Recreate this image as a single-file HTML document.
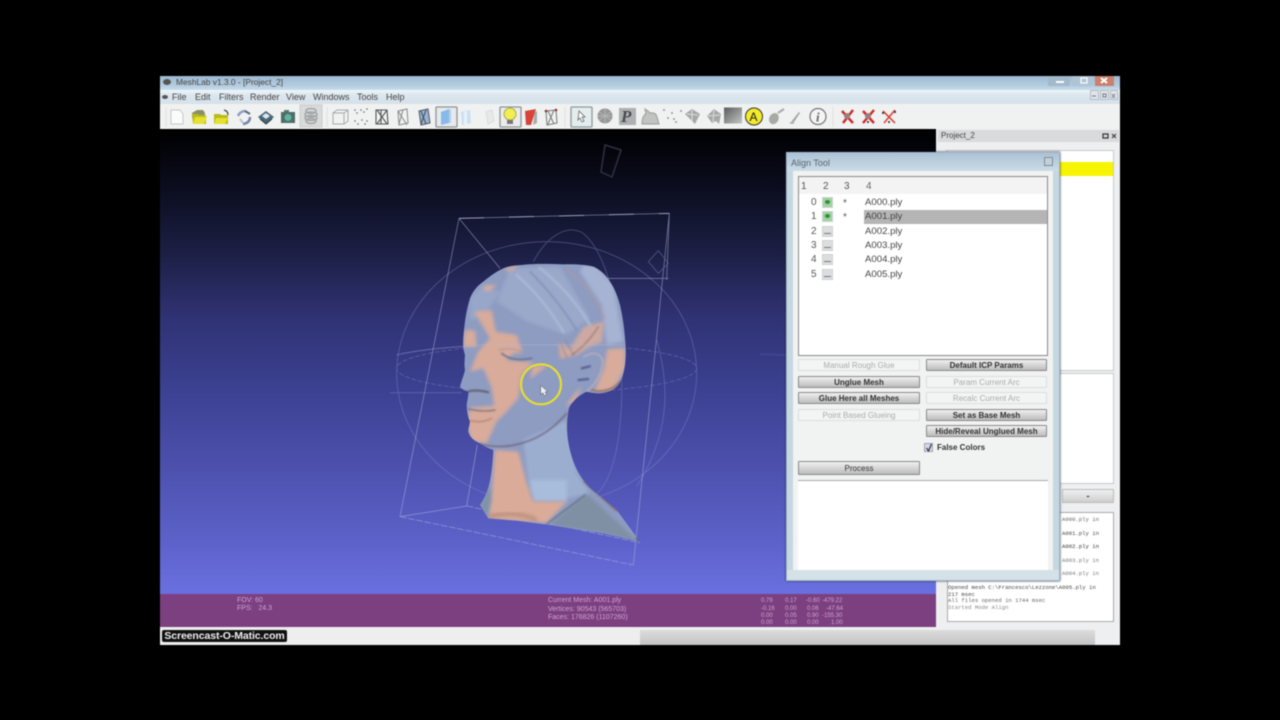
<!DOCTYPE html>
<html>
<head>
<meta charset="utf-8">
<style>
html,body{margin:0;padding:0;background:#000;width:1280px;height:720px;overflow:hidden}
body{font-family:"Liberation Sans",sans-serif;color:#333}
#w{position:absolute;left:0;top:0;width:1280px;height:720px;filter:blur(.5px)}
.a{position:absolute;white-space:nowrap}
.btn{position:absolute;height:12px;line-height:12px;text-align:center;font-size:8px;box-sizing:border-box;border:1px solid #8a8a8a;border-radius:1px;background:linear-gradient(#f0f0f0,#d6d6d6 50%,#bdbdbd);color:#333;font-weight:bold}
.dis{border:1px solid #dcdcdc;background:#f3f4f4;color:#aaa;font-weight:normal}
.row{position:absolute;left:865px;font-size:9.6px;color:#444;line-height:14px}
.num{position:absolute;left:811px;font-size:10px;color:#555;line-height:14px}
.eye{position:absolute;left:822px;width:11px;height:11px;background:#dcdede;border:1px solid #cfd1d1;box-sizing:border-box}
.eye:after{content:"";position:absolute;left:1px;right:1px;top:6px;height:1px;background:#778}
.eye.g{background:#9ed29e}
.eye.g:after{left:2px;right:2px;top:2px;height:4px;background:#2f8f3f;border-radius:50%}
.log{position:absolute;left:948px;font:5.6px "Liberation Mono",monospace;color:#666;white-space:nowrap}
.m{position:absolute;top:92px;font-size:9px;color:#444;line-height:11px}
.ov{position:absolute;font-size:7px;color:#cba6d2;white-space:nowrap;line-height:8px}
</style>
</head>
<body>
<div id="w">
<!-- window -->
<div class="a" style="left:160px;top:76px;width:960px;height:569px;background:#eef0f0"></div>
<div class="a" style="left:160px;top:76px;width:960px;height:14px;background:linear-gradient(#9db9d0,#b5cde0 70%,#c8dcea)"></div>
<div class="a" style="left:163px;top:79px;width:8px;height:6px;background:#555;border-radius:50%"></div>
<div class="a" style="left:176px;top:76px;font-size:8.4px;line-height:12px;color:#444">MeshLab v1.3.0 - [Project_2]</div>
<div class="a" style="left:160px;top:90px;width:960px;height:14px;background:linear-gradient(#eef8fa 0,#dde7ef 30%,#d6e0ea)"></div>
<div class="a" style="left:162px;top:95px;width:6px;height:4px;background:#555;border-radius:50%"></div>
<div class="m" style="left:172px">File</div>
<div class="m" style="left:195px">Edit</div>
<div class="m" style="left:219px">Filters</div>
<div class="m" style="left:250px">Render</div>
<div class="m" style="left:286px">View</div>
<div class="m" style="left:313px">Windows</div>
<div class="m" style="left:357px">Tools</div>
<div class="m" style="left:386px">Help</div>
<!-- window buttons -->
<div class="a" style="left:1048px;top:76px;width:22px;height:10px;background:#a2b9cc"></div>
<div class="a" style="left:1072px;top:76px;width:21px;height:10px;background:#aec4d5"></div>
<div class="a" style="left:1095px;top:76px;width:19px;height:10px;background:#c9806e"></div>
<svg class="a" style="left:1048px;top:76px" width="72" height="26">
<path d="M8 6h8" stroke="#fff" stroke-width="2"/>
<rect x="33" y="2" width="6" height="5" fill="none" stroke="#fff" stroke-width="1.200"/>
<path d="M53 2l6 5M59 2l-6 5" stroke="#fff" stroke-width="2"/>
<rect x="42.500" y="14.500" width="8" height="9" fill="#dfe5ea" stroke="#b4bcc4"/>
<rect x="52.500" y="14.500" width="8" height="9" fill="#dfe5ea" stroke="#b4bcc4"/>
<rect x="62.500" y="14.500" width="7" height="9" fill="#dfe5ea" stroke="#b4bcc4"/>
<path d="M44 20h4M55 18h3v3h-3zM64 18l3 4M67 18l-3 4" stroke="#778" fill="none"/>
</svg>
<!-- toolbar -->
<div class="a" style="left:160px;top:104px;width:960px;height:25px;background:#f0f1f1"></div>
<svg class="a" style="left:160px;top:104px" width="780" height="26" viewBox="160 104 780 26">
<rect x="300" y="105" width="22" height="22" fill="#d9dbdb" stroke="#cacccc"/>
<rect x="436" y="107" width="21" height="20" rx="1" fill="#e6eaec" stroke="#8e9496" stroke-width="1.300"/>
<rect x="500" y="107" width="21" height="20" rx="1" fill="#ececec" stroke="#8e9496" stroke-width="1.300"/>
<rect x="571" y="107" width="21" height="20" rx="1" fill="#e4ecee" stroke="#8e9a9c" stroke-width="1.300"/>
<path d="M327 107v20M166 107v20M565 107v20M833 107v20" stroke="#e0e0e0"/>
<!-- new -->
<path d="M171 110h9l3 4v10h-12z" fill="#fbfbfb" stroke="#c8c8c8"/>
<!-- open -->
<path d="M192 113l5-3 6 0 2 3-1 5-12 0z" fill="#8a8f66"/>
<path d="M192 114h6l1 1h7v9h-13z" fill="#b8bc18"/>
<path d="M193 124l2-7h12l-3 7z" fill="#e6e030"/>
<!-- recent -->
<path d="M214 114h6l1 1h7v9h-14z" fill="#b8bc18"/>
<path d="M214 124l2-6h12l-3 6z" fill="#e6e030"/>
<path d="M224 110q4 1 4 5" stroke="#444" fill="none" stroke-width="1.200"/>
<!-- reload -->
<path d="M238 116q2-5 8-5" stroke="#8da0c4" stroke-width="2.500" fill="none"/>
<path d="M250 117q0 6-7 7" stroke="#7486a6" stroke-width="2.500" fill="none"/>
<path d="M240 119l3 4" stroke="#b8c4d4" stroke-width="2"/>
<path d="M245 111l5 3" stroke="#5a6880" stroke-width="2"/>
<!-- save -->
<path d="M258 117l8-6 8 6-8 7z" fill="#46687a"/>
<path d="M262 116l4-3 4 3-4 3z" fill="#dfe6ea"/>
<path d="M260 119l6 5 6-5" stroke="#333" fill="none"/>
<!-- snapshot -->
<rect x="281" y="112" width="14" height="11" fill="#4d6e68"/>
<circle cx="288" cy="117.500" r="3.500" fill="#5fb3a0"/>
<rect x="284" y="110" width="5" height="2" fill="#5a7a70"/>
<!-- layers -->
<g fill="none" stroke="#a2a5a5" stroke-width="1.500">
<ellipse cx="311" cy="111" rx="5" ry="2.500"/><ellipse cx="311" cy="114.500" rx="6" ry="2.500"/><ellipse cx="311" cy="118" rx="6" ry="2.500"/><ellipse cx="311" cy="121" rx="5" ry="2.500"/>
</g>
<!-- box -->
<g fill="none" stroke="#a8aaaa"><path d="M333 113h11v11h-11zM333 113l4-3h11v11l-4 3M344 113l4-3"/></g>
<!-- points -->
<g fill="#666"><circle cx="355" cy="110" r=".8"/><circle cx="361" cy="110" r=".8"/><circle cx="367" cy="109" r=".8"/><circle cx="357" cy="113" r=".8"/><circle cx="364" cy="112" r=".8"/><circle cx="355" cy="121" r=".8"/><circle cx="362" cy="120" r=".8"/><circle cx="367" cy="121" r=".8"/><circle cx="358" cy="124" r=".8"/><circle cx="365" cy="124" r=".8"/></g>
<!-- wire -->
<g fill="none" stroke="#555" stroke-width="1.100"><path d="M376 110h11l1 14h-12zM377 110l10 14M387 110l-10 14M381 110v14"/></g>
<g fill="none" stroke="#888"><path d="M398 111l9-2 1 14-9 2zM398 111l9 14M403 110l-4 14"/></g>
<path d="M419 111l9-2 2 14-9 2z" fill="#98b4d0" stroke="#556"/><path d="M421 111l5 13M426 110l-5 14" stroke="#3d4a5a"/>
<path d="M441 112l8-3v14l-8 2z" fill="#86baea"/><path d="M449 109l2 1v13l-2 0z" fill="#b4cfe8"/>
<path d="M461 112l9-2 1 13-9 2z" fill="#c8e0f2"/><path d="M464 112l3-1v13l-3 1z" fill="#e8f2f9"/>
<path d="M486 112l6-2 2 11-6 3z" fill="#e8e8e8" stroke="#dcdcdc"/>
<!-- bulb -->
<circle cx="510" cy="114" r="6" fill="#f2ee50" stroke="#a8a860"/><rect x="507" y="120" width="6" height="4" fill="#777"/>
<!-- red -->
<path d="M525 111l11-2-5 16-5 0z" fill="#d8433a"/><path d="M535 110l2 2 0 11-4 2z" fill="#aaa"/>
<g fill="none" stroke="#777"><path d="M546 111l10-1 1 13-10 2zM548 111l6 13M554 110l-6 14"/></g>
<g fill="#8a3030"><circle cx="546" cy="111" r="1.300"/><circle cx="556" cy="110" r="1.300"/></g>
<!-- pointer -->
<path d="M579 111l6 6-3 0 2 4-2 1-2-4-2 2z" fill="#fff" stroke="#666" stroke-width=".8"/>
<!-- edit icons -->
<circle cx="605" cy="116" r="7.500" fill="#969797"/><path d="M599 112l12 8M611 112l-12 8M605 109v14M598 116h14" stroke="#b4b4b4"/>
<rect x="619" y="108" width="17" height="17" fill="#aeb1b1"/><text x="621" y="122" font-family="Liberation Serif,serif" font-weight="bold" font-style="italic" font-size="17" fill="#4a4a4e">P</text>
<path d="M642 124q0-8 4-10l-1-5 3 2 2 2q6-1 7 4l2 7z" fill="#c0c3c0" stroke="#9a9d9a"/>
<g fill="#999"><circle cx="664" cy="110" r="1"/><circle cx="672" cy="113" r="1"/><circle cx="681" cy="111" r="1"/><circle cx="668" cy="118" r="1"/><circle cx="676" cy="122" r="1"/><circle cx="674" cy="119" r="1"/></g>
<path d="M685 114l7-5 8 5-5 10-3-3z" fill="#a6a8a8"/><path d="M687 114l11 1M692 110l0 11" stroke="#ddd"/>
<path d="M707 116l7-7 7 5-2 10-3-3-4 2z" fill="#a6a8a8"/><path d="M708 116l12-1M714 110l-1 12" stroke="#ddd"/>
<defs><linearGradient id="g1" x1="0" y1="0" x2="1" y2="1"><stop offset="0" stop-color="#5a5c5c"/><stop offset="1" stop-color="#c4c6c6"/></linearGradient></defs>
<rect x="724" y="107.500" width="18" height="16" fill="url(#g1)"/>
<circle cx="754" cy="116.500" r="8.500" fill="#f2ea2a" stroke="#333"/>
<text x="749.500" y="121" font-size="12" fill="#222">A</text>
<path d="M769 119q1-6 7-6 4 2 2 8-3 4-6 3-3-1-3-5z" fill="#a8a8a4"/><path d="M778 113l6-4" stroke="#aaa" stroke-width="2"/>
<path d="M791 122l8-10 1 1-6 9z" fill="#a4a4a0"/><path d="M790 123l4 0" stroke="#888"/>
<circle cx="818" cy="116.500" r="8" fill="#f4f4f4" stroke="#777" stroke-width="1.200"/>
<text x="816" y="121.500" font-family="Liberation Serif,serif" font-style="italic" font-weight="bold" font-size="13" fill="#666">i</text>
<!-- X -->
<g stroke="#d02c2c" stroke-width="2.500"><path d="M842 111l11 12M853 110l-10 13M863 111l11 12M874 110l-11 13"/></g>
<g stroke="#d84a3c" stroke-width="1.600"><path d="M883 111l12 12M895 110l-11 13"/></g>
<g fill="#9a8080"><circle cx="847" cy="116" r="3"/><circle cx="868" cy="116" r="3"/></g>
<g fill="#222"><circle cx="883" cy="113" r="1"/><circle cx="889" cy="122" r="1"/><circle cx="895" cy="112" r="1"/><circle cx="868" cy="122" r="1"/></g>
</svg>
<!-- viewport -->
<div class="a" style="left:160px;top:129px;width:776px;height:465px;background:linear-gradient(#000 0,#0d0f22 14%,#1e2148 28%,#2f3272 40%,#3b4090 55%,#4c50ac 72%,#5c61c8 88%,#6a70e0 100%)"></div>
<svg class="a" style="left:160px;top:129px" width="776" height="465" viewBox="160 129 776 465">
<defs>
<filter id="b" x="-5%" y="-50%" width="110%" height="200%"><feGaussianBlur stdDeviation="2.500"/></filter>
<filter id="s" x="-30%" y="-30%" width="160%" height="160%"><feGaussianBlur stdDeviation="5"/></filter>
<filter id="t" x="-30%" y="-30%" width="160%" height="160%"><feGaussianBlur stdDeviation="1.500"/></filter>
<filter id="h" x="-5%" y="-5%" width="110%" height="110%"><feGaussianBlur stdDeviation="1.200"/></filter>
<clipPath id="head"><path id="hp" d="M240 295C250 270 265 255 280 245C300 228 315 218 330 210C350 198 375 196 395 195C440 190 480 192 520 193C560 192 590 195 610 200C635 212 650 228 660 245C675 268 684 292 690 315C698 350 703 385 705 415C708 445 708 470 705 495C700 525 695 545 680 560C665 573 650 578 630 580C615 580 600 578 590 575C570 585 558 595 550 605C540 615 536 625 535 635C528 680 530 720 545 770C560 820 590 860 620 880L680 930L750 1025L640 1000L480 975L380 962L295 955L270 915C295 880 305 840 310 750C295 745 282 738 270 730C252 722 240 712 235 695C234 685 240 675 240 665C234 650 230 632 230 615C232 600 236 585 235 575C225 572 215 568 210 560C215 540 222 525 225 510C222 495 224 480 225 465C220 450 220 440 220 445C218 415 222 390 225 365C228 340 234 315 240 295z"/></clipPath>
</defs>
<path d="M605 145L621 150L612 177L601 172z" fill="none" stroke="#2e3044" stroke-width="1.500"/>
<path d="M160 285H936" stroke="#3a2f68" stroke-width="6" opacity=".35" filter="url(#b)"/>
<path d="M760 354Q840 358 936 356" stroke="#5a5fb0" stroke-width="1" fill="none" opacity=".5"/>
<g transform="translate(390 200) scale(.33333)">
<g fill="none" stroke="#8f92cf" stroke-width="2.500" opacity=".42">
<ellipse cx="470" cy="520" rx="450" ry="395"/>
<ellipse cx="470" cy="505" rx="450" ry="72" stroke-dasharray="14 6"/>
<path d="M430 185C470 110 530 70 580 100C650 160 700 340 695 590C690 780 650 880 590 900"/>
<path d="M800 420C840 560 840 700 740 860"/>
<path d="M0 578H215"/>
</g>
<g fill="none" stroke="#b4b7e4" stroke-width="2.200" opacity=".62">
<path d="M207 55L838 40L830 240M207 55L30 950M838 40L730 1095M207 55L330 205M645 235H835M30 950L230 918L262 735"/>
<path d="M30 950L730 1095M230 918L750 1028" stroke-dasharray="20 5"/>
<path d="M775 185L805 152L835 190L805 220z" stroke="#7e80c0"/>
</g>
<path d="M207 55L838 40" stroke="#d6d8f0" stroke-width="3" stroke-dasharray="75 75" fill="none" opacity=".5"/>
<use href="#hp" fill="#8e9cc2"/>
<g clip-path="url(#head)" filter="url(#h)">
<!-- neck / chest -->
<g filter="url(#s)">
<path d="M400 720L530 660L560 820L600 880L480 905L420 880z" fill="#9caed0"/>
<path d="M420 840L530 840L530 905L430 905z" fill="#a8bcdc"/>
<path d="M480 975L590 880L750 1030L640 1000z" fill="#7f90a4"/>
<path d="M300 860L312 900L290 955L268 915z" fill="#7f93a8"/>
</g>
<g filter="url(#s)" fill="#dbab99">
<path d="M315 750L385 755L410 850L430 905L530 905L470 968L295 958L305 900z"/>
</g>
<path d="M295 950Q380 930 440 960" stroke="#a8806e" stroke-width="14" fill="none" opacity=".55" filter="url(#s)"/>
<g transform="translate(180 165)">
<!-- hair shading -->
<g filter="url(#s)">
<path d="M400 30L440 35L490 90L520 260L470 270L455 150L390 50z" fill="#a6b3d3"/>
<path d="M180 40L330 35L420 190L350 240L230 200L140 140z" fill="#9aa8ca"/>
<path d="M60 130L100 90L150 110L110 170L60 200z" fill="#97a6c9"/>
</g>
<!-- skin patches -->
<g filter="url(#s)" fill="#d8ab9b">
<path d="M72 170L125 165L138 230L200 240L218 292L190 296L168 315L250 322L215 360L205 430L170 470L140 500L110 565L62 560L50 500L60 458L132 452L125 400L100 340L60 350L84 290L120 250z"/>
<path d="M44 226L76 226L80 276L40 276z"/>
<path d="M105 92L140 88L120 108L100 108z"/>
<path d="M160 40L210 32L180 50z"/>
<path d="M250 332L292 332L240 372z"/>
<path d="M472 282L525 280L525 340L490 405L432 412L462 340z"/>
<path d="M402 214L462 200L456 262L420 275L380 300L330 312L325 262L360 280z" opacity=".85"/>
<path d="M375 415L395 395L375 440L345 455z"/>
</g>
<!-- strands and features -->
<g filter="url(#t)" fill="none" stroke-linecap="round">
<path d="M200 60Q280 130 340 230M270 40Q360 110 420 210" stroke="#a9b6d4" stroke-width="9"/>
<path d="M240 50Q320 130 380 225" stroke="#8393ba" stroke-width="5"/>
<path d="M350 45Q420 90 465 190" stroke="#b89a92" stroke-width="3"/>
<path d="M330 262L352 310M345 255L372 300" stroke="#9c8a94" stroke-width="3"/>
<path d="M365 300Q410 270 445 215" stroke="#97786e" stroke-width="3.500"/>
<path d="M400 305Q450 280 458 320Q455 370 410 410" stroke="#c0b0b8" stroke-width="4"/>
<path d="M395 340L420 334M385 375L415 372" stroke="#4a4a80" stroke-width="5"/>
<path d="M425 405Q480 420 520 370" stroke="#8d6e5e" stroke-width="5"/>
<path d="M155 295Q185 322 245 310" stroke="#5f6a8a" stroke-width="4.500"/>
<path d="M148 285Q190 275 215 292" stroke="#a68e90" stroke-width="2.500"/>
<path d="M52 410Q80 402 115 412" stroke="#5c5560" stroke-width="5"/>
<path d="M55 462Q100 472 135 465" stroke="#6a6878" stroke-width="3.500"/>
<path d="M60 497Q100 505 125 490" stroke="#a5786a" stroke-width="3"/>
</g>
</g>
<g filter="url(#t)" fill="none" stroke-linecap="round">
<path d="M270 732Q340 750 410 725Q480 700 530 640" stroke="#6e6078" stroke-width="4"/>
<path d="M535 660Q530 760 610 870" stroke="#8a6a60" stroke-width="5"/>
<path d="M585 845L680 930" stroke="#8a6e66" stroke-width="9"/>
<path d="M470 972L585 885" stroke="#62707e" stroke-width="4"/>
<path d="M740 1015L750 1025" stroke="#3c4a50" stroke-width="5"/>
</g>
</g>
<path d="M20 465Q100 445 290 435H700" fill="none" stroke="#b6badf" stroke-width="2" opacity=".65"/>
<circle cx="453" cy="553" r="60" fill="none" stroke="#e6de2e" stroke-width="6.500"/>
<path d="M452 556l0 28 6-6 6 9 6-3-5-8 8-1z" fill="#eef0f4" stroke="#555" stroke-width="1.500"/>
</g>
</svg>
<!-- purple bar -->
<div class="a" style="left:160px;top:594px;width:776px;height:33px;background:#7c3f80"></div>
<div class="ov" style="left:237px;top:597px">FOV: 60</div>
<div class="ov" style="left:237px;top:605px">FPS: &nbsp;&nbsp;24.3</div>
<div class="ov" style="left:548px;top:597px">Current Mesh: A001.ply</div>
<div class="ov" style="left:548px;top:606px">Vertices: 90543 (565703)</div>
<div class="ov" style="left:548px;top:614px">Faces: 176826 (1107260)</div>
<div class="ov" style="left:761px;top:597px;font-size:6px">0.79</div><div class="ov" style="left:785px;top:597px;font-size:6px">0.17</div><div class="ov" style="left:806px;top:597px;font-size:6px">-0.60</div><div class="ov" style="left:822px;top:597px;font-size:6px">-479.22</div>
<div class="ov" style="left:761px;top:605px;font-size:6px">-0.16</div><div class="ov" style="left:785px;top:605px;font-size:6px">0.00</div><div class="ov" style="left:807px;top:605px;font-size:6px">0.06</div><div class="ov" style="left:826px;top:605px;font-size:6px">-47.64</div>
<div class="ov" style="left:761px;top:612px;font-size:6px">0.00</div><div class="ov" style="left:785px;top:612px;font-size:6px">0.05</div><div class="ov" style="left:807px;top:612px;font-size:6px">0.90</div><div class="ov" style="left:822px;top:612px;font-size:6px">-155.30</div>
<div class="ov" style="left:761px;top:619px;font-size:6px">0.00</div><div class="ov" style="left:785px;top:619px;font-size:6px">0.00</div><div class="ov" style="left:807px;top:619px;font-size:6px">0.00</div><div class="ov" style="left:831px;top:619px;font-size:6px">1.00</div>
<!-- right panel -->
<div class="a" style="left:936px;top:129px;width:184px;height:516px;background:#eeeff0"></div>
<!-- bottom -->
<div class="a" style="left:160px;top:627px;width:480px;height:18px;background:#eeeeee"></div>
<div class="a" style="left:640px;top:630px;width:455px;height:15px;background:linear-gradient(#dcdcdc,#c4c4c4)"></div>
<div class="a" style="left:162px;top:630px;width:125px;height:12px;background:#111;border-radius:2px;color:#eee;font-size:10.500px;font-weight:bold;line-height:12px;text-align:center;letter-spacing:-.1px">Screencast-O-Matic.com</div>
<div class="a" style="left:938px;top:130px;width:181px;height:12px;background:#d9dadb"></div>
<div class="a" style="left:941px;top:131px;font-size:8px;line-height:10px;color:#444">Project_2</div>
<svg class="a" style="left:1100px;top:131px" width="18" height="10"><rect x="3" y="3" width="5" height="4" fill="none" stroke="#333" stroke-width="1.200"/><path d="M12 3l4 4M16 3l-4 4" stroke="#333"/></svg>
<div class="a" style="left:946px;top:150px;width:168px;height:221px;background:#fff;border:1px solid #c8c8c8;box-sizing:border-box"></div>
<div class="a" style="left:1060px;top:162px;width:53px;height:14px;background:#f7f400"></div>
<div class="a" style="left:946px;top:373px;width:168px;height:111px;background:#fff;border:1px solid #c8c8c8;box-sizing:border-box"></div>
<div class="a" style="left:1062px;top:489px;width:52px;height:14px;background:linear-gradient(#f0f0f0,#cfcfcf);border:1px solid #bbb;box-sizing:border-box;text-align:center;font-size:9px;line-height:12px;font-weight:bold">-</div>
<div class="a" style="left:947px;top:512px;width:167px;height:110px;background:#fff;border:1px solid #aaa;box-sizing:border-box"></div>
<div class="log" style="left:1062px;top:516px">A000.ply in</div>
<div class="log" style="left:1062px;top:530px;color:#444">A001.ply in</div>
<div class="log" style="left:1062px;top:543px;color:#333">A002.ply in</div>
<div class="log" style="left:1062px;top:557px;color:#777">A003.ply in</div>
<div class="log" style="left:1062px;top:570px;color:#777">A004.ply in</div>
<div class="log" style="top:584px;color:#444">Opened mesh C:\Francesco\Lezzone\A005.ply in</div>
<div class="log" style="top:591px;color:#444">217 msec</div>
<div class="log" style="top:597px">All files opened in 1744 msec</div>
<div class="log" style="top:604px;color:#888">Started Mode Align</div>
<!-- dialog -->
<div class="a" style="left:786px;top:152px;width:274px;height:429px;background:#dfe6e8;border:1px solid #9fb6c9;box-sizing:border-box;box-shadow:0 0 2px #223"></div>
<div class="a" style="left:787px;top:153px;width:272px;height:18px;background:linear-gradient(#abc3d5,#cbdce6)"></div>
<div class="a" style="left:787px;top:171px;width:6px;height:409px;background:#c5d7e1"></div>
<div class="a" style="left:1053px;top:171px;width:6px;height:409px;background:#c5d7e1"></div>
<div class="a" style="left:787px;top:570px;width:272px;height:10px;background:#d4e2e8"></div>
<div class="a" style="left:793px;top:171px;width:260px;height:399px;background:#f1f2f2"></div>
<div class="a" style="left:791px;top:158px;font-size:9px;line-height:11px;color:#5a6470">Align Tool</div>
<div class="a" style="left:1044px;top:157px;width:9px;height:9px;background:#c3ced6;border:1px solid #7f8d99;box-sizing:border-box"></div>
<div class="a" style="left:798px;top:176px;width:250px;height:180px;background:#fff;border:1px solid #8a8a8a;box-sizing:border-box"></div>
<div class="a" style="left:799px;top:177px;width:248px;height:17px;background:#f3f3f3"></div>
<div class="a" style="left:801px;top:181px;font-size:10px;line-height:11px;color:#555">1</div>
<div class="a" style="left:823px;top:181px;font-size:10px;line-height:11px;color:#555">2</div>
<div class="a" style="left:844px;top:181px;font-size:10px;line-height:11px;color:#555">3</div>
<div class="a" style="left:866px;top:181px;font-size:10px;line-height:11px;color:#666">4</div>
<div class="a" style="left:864px;top:210px;width:183px;height:14px;background:#b5b5b5"></div>
<div class="num" style="top:196px">0</div><div class="eye g" style="top:197px"></div><div class="a" style="left:843px;top:197px;font-size:10px;line-height:14px;color:#555">*</div><div class="row" style="top:196px">A000.ply</div>
<div class="num" style="top:210px">1</div><div class="eye g" style="top:211px"></div><div class="a" style="left:843px;top:211px;font-size:10px;line-height:14px;color:#555">*</div><div class="row" style="top:210px">A001.ply</div>
<div class="num" style="top:225px">2</div><div class="eye" style="top:226px"></div><div class="row" style="top:225px">A002.ply</div>
<div class="num" style="top:239px">3</div><div class="eye" style="top:240px"></div><div class="row" style="top:239px">A003.ply</div>
<div class="num" style="top:253px">4</div><div class="eye" style="top:254px"></div><div class="row" style="top:253px">A004.ply</div>
<div class="num" style="top:268px">5</div><div class="eye" style="top:269px"></div><div class="row" style="top:268px">A005.ply</div>
<div class="btn dis" style="left:798px;top:359px;width:122px">Manual Rough Glue</div>
<div class="btn" style="left:926px;top:359px;width:121px">Default ICP Params</div>
<div class="btn" style="left:798px;top:376px;width:122px">Unglue Mesh</div>
<div class="btn dis" style="left:926px;top:376px;width:121px">Param Current Arc</div>
<div class="btn" style="left:798px;top:392px;width:122px">Glue Here all Meshes</div>
<div class="btn dis" style="left:926px;top:392px;width:121px">Recalc Current Arc</div>
<div class="btn dis" style="left:798px;top:409px;width:122px">Point Based Glueing</div>
<div class="btn" style="left:926px;top:409px;width:121px">Set as Base Mesh</div>
<div class="btn" style="left:926px;top:425px;width:121px">Hide/Reveal Unglued Mesh</div>
<div class="a" style="left:924px;top:443px;width:9px;height:9px;background:#d5d9e6;border:1px solid #a0a4b0;box-sizing:border-box"></div>
<svg class="a" style="left:924px;top:443px" width="10" height="10"><path d="M2.500 5l2 3 3-7" stroke="#334" stroke-width="1.200" fill="none"/></svg>
<div class="a" style="left:937px;top:443px;font-size:8px;line-height:10px;color:#333;font-weight:bold">False Colors</div>
<div class="btn" style="left:798px;top:461px;width:122px;height:14px;line-height:13px;font-weight:normal">Process</div>
<div class="a" style="left:798px;top:480px;width:250px;height:90px;background:#fff;border-top:1px solid #aaa;box-sizing:border-box"></div>
</div>
</body>
</html>
